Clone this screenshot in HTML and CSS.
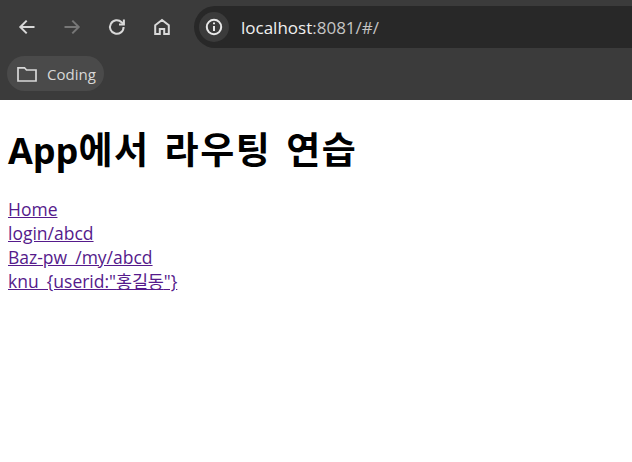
FILE: index.html
```html
<!DOCTYPE html>
<html lang="ko">
<head>
<meta charset="utf-8">
<title>App</title>
<link rel="stylesheet" href="styles.css">
</head>
<body>
<header class="chrome">
  <div class="toolbar">
    <span class="nav-btn"><svg width="20" height="20" viewBox="0 0 20 20" class="ico"><path d="M17.5 10H3.5M9.7 3.6L3.3 10l6.4 6.4"/></svg></span>
    <span class="nav-btn dim"><svg width="20" height="20" viewBox="0 0 20 20" class="ico"><path d="M2.5 10h14M10.3 3.6L16.7 10l-6.4 6.4"/></svg></span>
    <span class="nav-btn"><svg width="20" height="20" viewBox="0 0 20 20" class="ico"><path d="M16.6 10a6.8 6.8 0 1 1-2-4.8l2 2"/><path d="M16.9 2.6v4.9H12"/></svg></span>
    <span class="nav-btn"><svg width="20" height="20" viewBox="0 0 20 20" class="ico"><path d="M3.2 8.2L10 2.9l6.8 5.3v8.9h-4.6v-5.2H7.8v5.2H3.2z"/></svg></span>
    <div class="omnibox">
      <span class="info"><svg width="20" height="20" viewBox="0 0 20 20" class="ico"><circle cx="10" cy="10" r="7.2"/><path d="M10 9v5"/><path d="M10 5.6v1.6"/></svg></span>
      <span class="url">localhost<span class="url-rest">:8081/#/</span></span>
    </div>
  </div>
  <div class="bookmarks">
    <div class="bookmark">
      <svg width="22" height="20" viewBox="0 0 22 20" class="ico thin"><path d="M2 3.8h6.5l2 2.2H20v11H2z"/></svg>
      <span>Coding</span>
    </div>
  </div>
</header>
<main class="page">
  <h1 class="title">App<span class="title-ko">에서 라우팅 연습</span></h1>
  <nav class="links">
    <a href="#/" class="link">Home</a>
    <a href="#/login" class="link">login/abcd</a>
    <a href="#/baz" class="link">Baz-pw  /my/abcd</a>
    <a href="#/knu" class="link">knu  {userid:"<span class="link-ko">홍길동</span>"}</a>
  </nav>
</main>
</body>
</html>
```
FILE: styles.css
```css
* { box-sizing: border-box; }
html, body { margin: 0; height: 100%; overflow: hidden; background: #fff; }
body { font-family: "Open Sans", "Noto Sans CJK KR", sans-serif; }
.chrome { height: 100px; background: #3b3b3b; color: #e3e3e3; }
.toolbar { height: 56px; display: flex; align-items: center; padding-left: 4px; padding-bottom: 2px; }
.nav-btn { width: 45px; height: 36px; display: flex; align-items: center; justify-content: center; flex: none; color: #d9d9d9; }
.dim { color: #777; }
.ico { fill: none; stroke: currentColor; stroke-width: 2; display: block; }
.thin { stroke-width: 1.7; }
.omnibox { flex: 1; height: 42px; margin-left: 10px; background: #282828; border-radius: 21px 0 0 21px; display: flex; align-items: center; padding-left: 5px; }
.info { width: 30px; height: 30px; border-radius: 50%; background: #3b3b3b; display: flex; align-items: center; justify-content: center; color: #e8e8e8; }
.url { margin-left: 12px; font-size: 17px; color: #f0f0f0; }
.url-rest { color: #c4c4c4; }
.bookmarks { display: flex; padding-left: 7px; }
.bookmark { height: 35px; width: 97px; border-radius: 17.5px; background: #4a4a4a; display: flex; align-items: center; gap: 9px; padding-left: 9px; font-size: 15px; color: #d8d8d8; }
.page { padding: 0 8px; }
.title { margin: 26px 0 23px; font-size: 36px; line-height: 47px; font-weight: 700; color: #000; }
.title-ko { font-size: 37px; letter-spacing: 1.5px; word-spacing: 4px; }
.links { display: flex; flex-direction: column; align-items: flex-start; }
.link { font-size: 17.5px; line-height: 24px; color: #551a8b; white-space: pre; word-spacing: -0.5px; }
.link-ko { letter-spacing: -0.2px; }
```
